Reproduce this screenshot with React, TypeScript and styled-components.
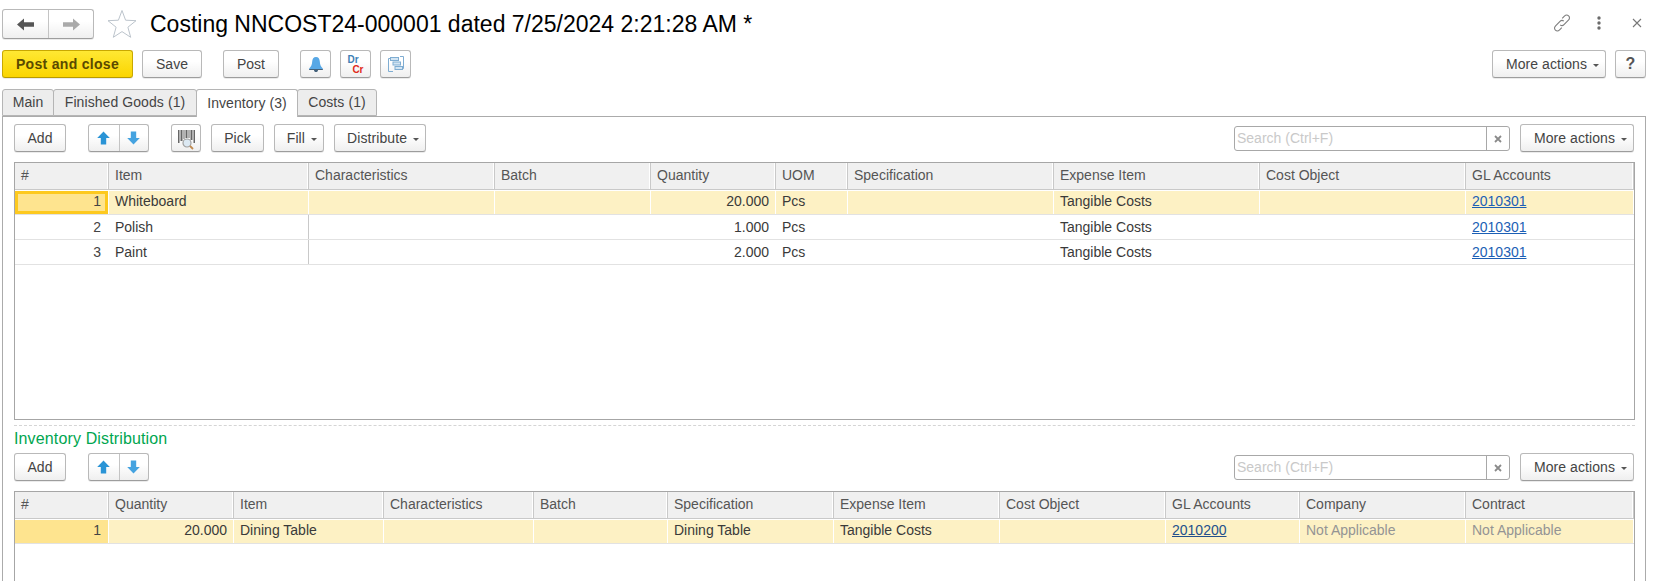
import React from "react";
import styled, { createGlobalStyle } from "styled-components";

const Global = createGlobalStyle`
  html, body { margin: 0; padding: 0; background: #fff; }
  body { font-family: "Liberation Sans", Arial, sans-serif; font-size: 14px; color: #444; overflow: hidden; }
`;

const Page = styled.div`
  width: 1658px;
  height: 581px;
  overflow: hidden;
  display: flex;
  flex-direction: column;
  box-sizing: border-box;
  padding-left: 2px;
`;

const TitleBar = styled.div`
  display: flex;
  align-items: center;
  height: 30px;
  margin-top: 9px;
`;

const Title = styled.h1`
  margin: 0 0 0 13px;
  font-size: 23px;
  font-weight: 400;
  color: #000;
  white-space: nowrap;
  line-height: 30px;
`;

const TitleIcons = styled.div`
  margin-left: auto;
  margin-right: 16px;
  margin-bottom: 2px;
  display: flex;
  align-items: center;
`;

const Btn = styled.button<{ $w?: number; $primary?: boolean }>`
  box-sizing: border-box;
  height: 28px;
  width: ${(p) => (p.$w ? p.$w + "px" : "auto")};
  padding: 0;
  flex: none;
  display: inline-flex;
  align-items: center;
  justify-content: center;
  font-family: inherit;
  font-size: 14px;
  color: ${(p) => (p.$primary ? "#5a4a00" : "#444")};
  font-weight: ${(p) => (p.$primary ? 700 : 400)};
  letter-spacing: ${(p) => (p.$primary ? "0.3px" : "0")};
  border: 1px solid ${(p) => (p.$primary ? "#c9a800" : "#b9b9b9")};
  border-bottom-color: ${(p) => (p.$primary ? "#b89a00" : "#9d9d9d")};
  border-radius: 3px;
  background: ${(p) =>
    p.$primary ? "linear-gradient(#ffe833, #fbd500)" : "linear-gradient(#ffffff 40%, #efefef)"};
  box-shadow: 0 1px 0 rgba(0, 0, 0, 0.08);
`;

const MenuBtn = styled(Btn)`
  justify-content: flex-end;
  padding-right: 6px;
  letter-spacing: 0.08px;
`;

const Caret = styled.span`
  display: inline-block;
  margin-left: 6px;
  margin-top: 2px;
  width: 0;
  height: 0;
  border-left: 3px solid transparent;
  border-right: 3px solid transparent;
  border-top: 3px solid #555;
`;

const Pair = styled.div<{ $w: number; $h: number }>`
  box-sizing: border-box;
  width: ${(p) => p.$w}px;
  height: ${(p) => p.$h}px;
  flex: none;
  display: grid;
  grid-template-columns: 1fr 1fr;
  border: 1px solid #b9b9b9;
  border-bottom-color: #9d9d9d;
  border-radius: 3px;
  background: linear-gradient(#ffffff 40%, #efefef);
  box-shadow: 0 1px 0 rgba(0, 0, 0, 0.08);
`;

const PairPart = styled.div`
  display: flex;
  align-items: center;
  justify-content: center;
  & + & { border-left: 1px solid #c4c4c4; }
`;

const CommandBar = styled.div`
  display: flex;
  align-items: center;
  height: 28px;
  margin-top: 11px;
  padding-right: 12px;
`;

const Spacer = styled.div<{ $w: number }>`
  width: ${(p) => p.$w}px;
  flex: none;
`;

const Push = styled.div`
  flex: 1;
`;

const TabStrip = styled.div`
  display: flex;
  align-items: flex-start;
  height: 27px;
  margin-top: 11px;
  position: relative;
  z-index: 1;
`;

const Tab = styled.div<{ $w: number; $active?: boolean }>`
  box-sizing: border-box;
  width: ${(p) => p.$w}px;
  height: ${(p) => (p.$active ? 28 : 27)}px;
  padding-bottom: 1px;
  display: flex;
  align-items: center;
  justify-content: center;
  background: ${(p) => (p.$active ? "#fff" : "#ededed")};
  border: 1px solid #b5b5b5;
  border-bottom: ${(p) => (p.$active ? "none" : "1px solid #b5b5b5")};
  border-radius: 3px 3px 0 0;
  margin-right: -1px;
  color: #444;
  letter-spacing: 0.08px;
`;

const Panel = styled.div`
  box-sizing: border-box;
  width: 1644px;
  flex: 1;
  min-height: 0;
  border: 1px solid #ababab;
  border-bottom: none;
  padding: 7px 11px 0;
  display: flex;
  flex-direction: column;
`;

const Toolbar = styled.div`
  display: flex;
  align-items: center;
  height: 28px;
  flex: none;
`;

const Search = styled.div`
  box-sizing: border-box;
  width: 276px;
  height: 25px;
  margin-top: 1px;
  flex: none;
  display: flex;
  border: 1px solid #a8a8a8;
  border-radius: 3px;
  background: #fff;
`;

const SearchText = styled.div`
  flex: 1;
  color: #c9c9c9;
  line-height: 22px;
  padding-left: 2px;
`;

const SearchClear = styled.div`
  width: 22px;
  border-left: 1px solid #a8a8a8;
  display: flex;
  align-items: center;
  justify-content: center;
`;

const Table = styled.div<{ $h?: number; $open?: boolean }>`
  box-sizing: border-box;
  margin-top: 10px;
  width: 1621px;
  height: ${(p) => (p.$h ? p.$h + "px" : "auto")};
  flex: ${(p) => (p.$open ? 1 : "none")};
  border: 1px solid #a6a6a6;
  border-bottom: ${(p) => (p.$open ? "none" : "1px solid #a6a6a6")};
`;

const HeaderRow = styled.div<{ $cols: string }>`
  display: grid;
  grid-template-columns: ${(p) => p.$cols};
  box-sizing: border-box;
  height: 27px;
  border-bottom: 1px solid #c9c9c9;
`;

const HeaderCell = styled.div`
  background: #f0f0f0;
  border-right: 1px solid #fff;
  box-shadow: 1px 0 0 #c9c9c9;
  line-height: 25px;
  padding-left: 6px;
  color: #555;
  white-space: nowrap;
  overflow: hidden;
  margin-right: 1px;
`;

const Row = styled.div<{ $cols: string; $selected?: boolean }>`
  display: grid;
  grid-template-columns: ${(p) => p.$cols};
  height: 25px;
  box-sizing: border-box;
  padding-top: ${(p) => (p.$selected ? 1 : 0)}px;
  border-bottom: 1px solid #e2e2e2;
  background: #fff;
`;

const Cell = styled.div<{
  $right?: boolean;
  $selected?: boolean;
  $muted?: boolean;
  $rule?: boolean;
}>`
  box-sizing: border-box;
  line-height: ${(p) => (p.$selected ? 21 : 24)}px;
  padding: 0 6px;
  text-align: ${(p) => (p.$right ? "right" : "left")};
  color: ${(p) => (p.$muted ? "#949494" : "#3a3a3a")};
  background: ${(p) => (p.$selected ? "#fdf1c4" : "transparent")};
  border-right: 1px solid ${(p) => (p.$selected ? "#fff" : p.$rule ? "#c9c9c9" : "transparent")};
  white-space: nowrap;
  overflow: hidden;
`;

const NumCell = styled(Cell)<{ $focus?: boolean }>`
  background: #fee48f;
  border-right: none;
  margin-right: 1px;
  padding-right: 7px;
  color: #444;
  line-height: 21px;
  outline: ${(p) => (p.$focus ? "3px solid #fdc91f" : "none")};
  outline-offset: -3px;
`;

const PlainNum = styled(Cell)`
  color: #444;
  padding-right: 7px;
`;

const AccountLink = styled.a`
  color: #1c5fb5;
  text-decoration: underline;
`;

const DarkLink = styled(AccountLink)`
  color: #23508c;
`;

const SectionDivider = styled.div`
  flex: none;
  margin-top: 5px;
  width: 1621px;
  border-top: 1px dashed #d5d5d5;
`;

const SectionTitle = styled.div`
  flex: none;
  color: #00a650;
  font-size: 16px;
  letter-spacing: 0.14px;
  line-height: 18px;
  margin-top: 4px;
  margin-bottom: 5px;
`;

const DrCr = styled.div`
  position: relative;
  width: 20px;
  height: 20px;
  font-size: 10px;
  font-weight: 700;
  line-height: 9px;
`;

const Dr = styled.span`
  position: absolute;
  left: 2px;
  top: 1px;
  color: #3f7fb5;
`;

const Cr = styled.span`
  position: absolute;
  right: 2px;
  bottom: 0;
  color: #e02a20;
`;

const HelpMark = styled.span`
  font-weight: 700;
  font-size: 16px;
  color: #555;
`;

const BarcodeSvg = styled.svg`
  margin-top: 4px;
`;

const Back = ({ color }: { color: string }) => (
  <svg width="17" height="13" viewBox="0 0 17 13">
    <path d="M0 6.5 L7 0.5 V4.3 H17 V8.7 H7 V12.5 Z" fill={color} />
  </svg>
);
const Forward = ({ color }: { color: string }) => (
  <svg width="17" height="13" viewBox="0 0 17 13">
    <path d="M17 6.5 L10 0.5 V4.3 H0 V8.7 H10 V12.5 Z" fill={color} />
  </svg>
);
const Star = () => (
  <svg width="30" height="30" viewBox="0 0 30 30" style={{ marginLeft: 13, flex: "none" }}>
    <path
      d="M15 1.5 L18.6 11.2 L29 11.7 L20.9 18.2 L23.7 28.3 L15 22.6 L6.3 28.3 L9.1 18.2 L1 11.7 L11.4 11.2 Z"
      fill="#fff"
      stroke="#bcc4cc"
      strokeWidth="1"
    />
  </svg>
);
const LinkIcon = () => (
  <svg width="20" height="20" viewBox="0 0 20 20" fill="none" stroke="#7d7d7d" strokeWidth="1.1">
    <path d="M8.2 11.8 C9.6 13 11 12.6 12 11.6 L16.4 7.2 C17.8 5.8 17.8 4 16.6 2.9 C15.4 1.8 13.7 1.9 12.4 3.2 L10.2 5.4" />
    <path d="M11.8 8.2 C10.4 7 9 7.4 8 8.4 L3.6 12.8 C2.2 14.2 2.2 16 3.4 17.1 C4.6 18.2 6.3 18.1 7.6 16.8 L9.8 14.6" />
  </svg>
);
const Dots = () => (
  <svg width="6" height="14" viewBox="0 0 6 14" fill="#6b6b6b">
    <circle cx="3" cy="2" r="1.7" />
    <circle cx="3" cy="7" r="1.7" />
    <circle cx="3" cy="12" r="1.7" />
  </svg>
);
const Close = () => (
  <svg width="10" height="10" viewBox="0 0 10 10" stroke="#777" strokeWidth="1.1" fill="none">
    <path d="M1 1 L9 9 M9 1 L1 9" />
  </svg>
);
const SmallX = () => (
  <svg width="8" height="8" viewBox="0 0 8 8" stroke="#8a8a8a" strokeWidth="1.8" fill="none">
    <path d="M1 1 L7 7 M7 1 L1 7" />
  </svg>
);
const Bell = () => (
  <svg width="16" height="17" viewBox="0 0 16 17">
    <path d="M8 1 C5.4 1 4.4 3 4.2 5.5 C4 9 3.2 10.6 1.2 12.4 V13.4 H14.8 V12.4 C12.8 10.6 12 9 11.8 5.5 C11.6 3 10.6 1 8 1 Z" fill="#58a8e6" />
    <path d="M6 14 H10 C10 15.4 9.1 16 8 16 C6.9 16 6 15.4 6 14 Z" fill="#44617a" />
    <rect x="1.2" y="13" width="13.6" height="1" fill="#44617a" />
  </svg>
);
const Structure = () => (
  <svg width="16" height="16" viewBox="0 0 16 16" fill="#d3e5f3" stroke="#7fadd2" strokeWidth="1">
    <path d="M2.5 2.5 H0.5 V15.5 H5 M12 0.5 H15.5 V12.5 H14" fill="none" />
    <rect x="2.5" y="1.5" width="8" height="3" />
    <rect x="5" y="6" width="7.5" height="3" />
    <rect x="7" y="10.5" width="7.5" height="3" />
  </svg>
);
const Up = () => (
  <svg width="13" height="14" viewBox="0 0 13 14">
    <path d="M6.5 0.5 L12.8 7 H9.2 V13.5 H3.8 V7 H0.2 Z" fill="#2a94d6" />
  </svg>
);
const Down = () => (
  <svg width="13" height="14" viewBox="0 0 13 14">
    <path d="M6.5 13.5 L12.8 7 H9.2 V0.5 H3.8 V7 H0.2 Z" fill="#45a3e0" />
  </svg>
);
const Barcode = () => (
  <BarcodeSvg width="17" height="20" viewBox="0 0 17 20">
    <g fill="#666">
      <rect x="0" y="0" width="1.5" height="13" />
      <rect x="2.5" y="0" width="2" height="11" />
      <rect x="5.5" y="0" width="1" height="9" />
      <rect x="7.5" y="0" width="2" height="8" />
      <rect x="10.5" y="0" width="1" height="8" />
      <rect x="12.5" y="0" width="2" height="10" />
      <rect x="15.5" y="0" width="1.5" height="13" />
    </g>
    <circle cx="9" cy="13" r="4" fill="#dce9f3" stroke="#a0a0a0" strokeWidth="1.2" />
    <path d="M12 16 L15 19" stroke="#c08a50" strokeWidth="1.8" />
  </BarcodeSvg>
);

const topCols = "94px 200px 186px 156px 125px 72px 206px 206px 206px 1fr";
const botCols = "94px 125px 150px 150px 134px 166px 166px 166px 134px 166px 1fr";

const topHead = ["#", "Item", "Characteristics", "Batch", "Quantity", "UOM", "Specification", "Expense Item", "Cost Object", "GL Accounts"];
const botHead = ["#", "Quantity", "Item", "Characteristics", "Batch", "Specification", "Expense Item", "Cost Object", "GL Accounts", "Company", "Contract"];

const topRows = [
  { n: 1, item: "Whiteboard", qty: "20.000" },
  { n: 2, item: "Polish", qty: "1.000" },
  { n: 3, item: "Paint", qty: "2.000" },
];

const Header = ({ cols, names }: { cols: string; names: string[] }) => (
  <HeaderRow $cols={cols}>
    {names.map((n) => (
      <HeaderCell key={n}>{n}</HeaderCell>
    ))}
  </HeaderRow>
);

const ListToolbar = ({ children }: { children?: React.ReactNode }) => (
  <Toolbar>
    <Btn $w={52}>Add</Btn>
    <Spacer $w={22} />
    <Pair $w={61} $h={28}>
      <PairPart><Up /></PairPart>
      <PairPart><Down /></PairPart>
    </Pair>
    {children}
    <Push />
    <Search>
      <SearchText>Search (Ctrl+F)</SearchText>
      <SearchClear><SmallX /></SearchClear>
    </Search>
    <Spacer $w={10} />
    <MenuBtn $w={114}>More actions<Caret /></MenuBtn>
  </Toolbar>
);

export default function App() {
  return (
    <Page>
      <Global />
      <TitleBar>
        <Pair $w={92} $h={30}>
          <PairPart><Back color="#555" /></PairPart>
          <PairPart><Forward color="#aaa" /></PairPart>
        </Pair>
        <Star />
        <Title>Costing NNCOST24-000001 dated 7/25/2024 2:21:28 AM *</Title>
        <TitleIcons>
          <LinkIcon />
          <Spacer $w={24} />
          <Dots />
          <Spacer $w={30} />
          <Close />
        </TitleIcons>
      </TitleBar>
      <CommandBar>
        <Btn $primary $w={131}>Post and close</Btn>
        <Spacer $w={9} />
        <Btn $w={60}>Save</Btn>
        <Spacer $w={21} />
        <Btn $w={56}>Post</Btn>
        <Spacer $w={21} />
        <Btn $w={31}><Bell /></Btn>
        <Spacer $w={9} />
        <Btn $w={31}><DrCr><Dr>Dr</Dr><Cr>Cr</Cr></DrCr></Btn>
        <Spacer $w={9} />
        <Btn $w={31}><Structure /></Btn>
        <Push />
        <MenuBtn $w={114}>More actions<Caret /></MenuBtn>
        <Spacer $w={9} />
        <Btn $w={31}><HelpMark>?</HelpMark></Btn>
      </CommandBar>
      <TabStrip>
        <Tab $w={52}>Main</Tab>
        <Tab $w={144}>Finished Goods (1)</Tab>
        <Tab $w={102} $active>Inventory (3)</Tab>
        <Tab $w={80}>Costs (1)</Tab>
      </TabStrip>
      <Panel>
        <ListToolbar>
          <Spacer $w={22} />
          <Btn $w={30}><Barcode /></Btn>
          <Spacer $w={10} />
          <Btn $w={53}>Pick</Btn>
          <Spacer $w={10} />
          <MenuBtn $w={50}>Fill<Caret /></MenuBtn>
          <Spacer $w={10} />
          <MenuBtn $w={92}>Distribute<Caret /></MenuBtn>
        </ListToolbar>
        <Table $h={258}>
          <Header cols={topCols} names={topHead} />
          {topRows.map((r, i) => {
            const sel = i === 0;
            return (
              <Row key={r.n} $cols={topCols} $selected={sel}>
                {sel ? <NumCell $right $focus>{r.n}</NumCell> : <PlainNum $right>{r.n}</PlainNum>}
                <Cell $selected={sel} $rule>{r.item}</Cell>
                <Cell $selected={sel} />
                <Cell $selected={sel} />
                <Cell $selected={sel} $right>{r.qty}</Cell>
                <Cell $selected={sel}>Pcs</Cell>
                <Cell $selected={sel} />
                <Cell $selected={sel}>Tangible Costs</Cell>
                <Cell $selected={sel} />
                <Cell $selected={sel}><AccountLink>2010301</AccountLink></Cell>
              </Row>
            );
          })}
        </Table>
        <SectionDivider />
        <SectionTitle>Inventory Distribution</SectionTitle>
        <ListToolbar />
        <Table $open>
          <Header cols={botCols} names={botHead} />
          <Row $cols={botCols} $selected>
            <NumCell $right>1</NumCell>
            <Cell $selected $right>20.000</Cell>
            <Cell $selected>Dining Table</Cell>
            <Cell $selected />
            <Cell $selected />
            <Cell $selected>Dining Table</Cell>
            <Cell $selected>Tangible Costs</Cell>
            <Cell $selected />
            <Cell $selected><DarkLink>2010200</DarkLink></Cell>
            <Cell $selected $muted>Not Applicable</Cell>
            <Cell $selected $muted>Not Applicable</Cell>
          </Row>
        </Table>
      </Panel>
    </Page>
  );
}
